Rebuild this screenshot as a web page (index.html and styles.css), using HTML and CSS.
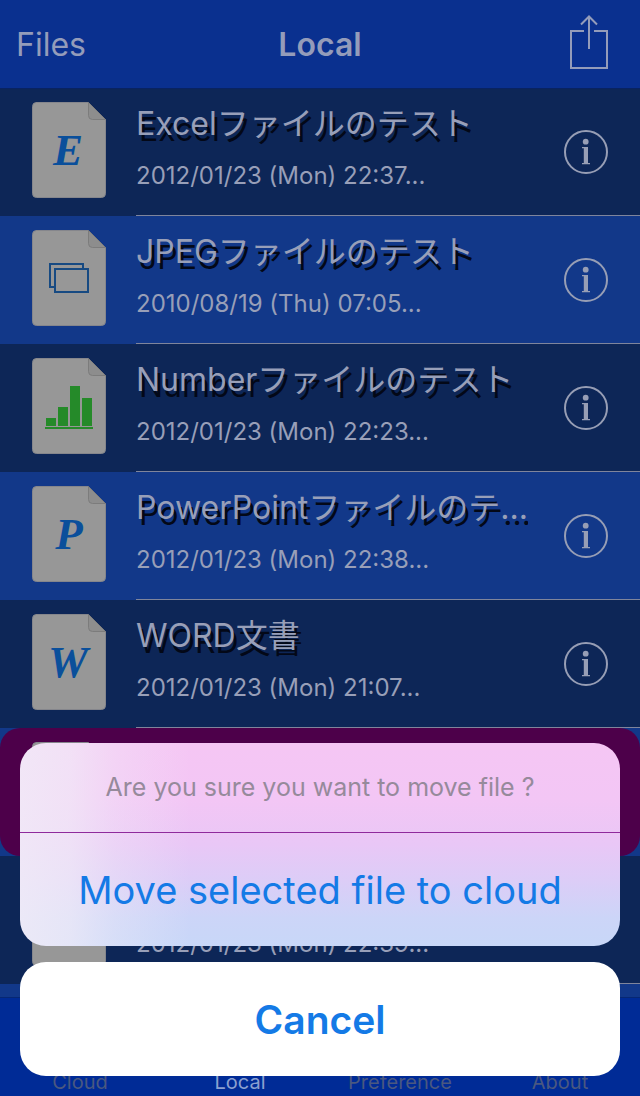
FILE: index.html
```html
<!DOCTYPE html>
<html lang="en">
<head>
<meta charset="utf-8">
<meta name="viewport" content="width=device-width, initial-scale=1">
<title>Local</title>
<link rel="stylesheet" href="styles.css">
</head>
<body>
<svg class="symbols" aria-hidden="true">
  <symbol id="sheet" viewBox="0 0 74 96">
    <path d="M4 .5H56L73.500 17.500V91.500a4 4 0 0 1-4 4H4.500a4 4 0 0 1-4-4V4.500a4 4 0 0 1 4-4Z" fill="#979797" stroke="#85868c"/>
    <path d="M56.500 .5V13.500a4 4 0 0 0 4 4H73.500Z" fill="#8d8d8d" stroke="#7c7c7c"/>
  </symbol>
  <symbol id="info" viewBox="0 0 44 44">
    <circle cx="22" cy="22" r="21" fill="none" stroke="#979eb5" stroke-width="2"/>
    <circle cx="21.700" cy="11.700" r="2.900" fill="#979eb5"/>
    <path d="M18 17H24V33H26V34.300H18V33H19.800V18.300H18Z" fill="#979eb5"/>
  </symbol>
</svg>
<div class="app">
  <header class="navbar">
    <button class="nav-back" type="button">Files</button>
    <h1 class="nav-title">Local</h1>
    <button class="nav-share" type="button" aria-label="Share">
      <svg width="38" height="54" viewBox="0 0 38 54" fill="none" stroke="#949cba" stroke-width="2"><path d="M14 16H1V53H37V16H24M19 34V1.500M11 9.500L19 1.500L27 9.500"/></svg>
    </button>
  </header>
  <main class="content">
    <ul class="files">
      <li class="file">
        <svg class="file-icon" viewBox="0 0 74 96"><use href="#sheet"/><text class="glyph" x="36" y="63">E</text></svg>
        <div class="file-body"><div class="file-text"><h2 class="file-name">Excelファイルのテスト</h2><p class="file-date">2012/01/23 (Mon) 22:37...</p></div>
        <button class="info" type="button" aria-label="File details"><svg width="44" height="44"><use href="#info"/></svg></button></div>
      </li>
      <li class="file">
        <svg class="file-icon" viewBox="0 0 74 96"><use href="#sheet"/><path d="M51 38V34H18V57H22M23 39H56V62H23Z" fill="none" stroke="#174a82" stroke-width="2"/></svg>
        <div class="file-body"><div class="file-text"><h2 class="file-name">JPEGファイルのテスト</h2><p class="file-date">2010/08/19 (Thu) 07:05...</p></div>
        <button class="info" type="button" aria-label="File details"><svg width="44" height="44"><use href="#info"/></svg></button></div>
      </li>
      <li class="file">
        <svg class="file-icon" viewBox="0 0 74 96"><use href="#sheet"/><path d="M14 60H24V68H14ZM26 49H36V68H26ZM38 28H48V68H38ZM50 40H60V68H50ZM13 69H61V71H13Z" fill="#258a29"/></svg>
        <div class="file-body"><div class="file-text"><h2 class="file-name">Numberファイルのテスト</h2><p class="file-date">2012/01/23 (Mon) 22:23...</p></div>
        <button class="info" type="button" aria-label="File details"><svg width="44" height="44"><use href="#info"/></svg></button></div>
      </li>
      <li class="file">
        <svg class="file-icon" viewBox="0 0 74 96"><use href="#sheet"/><text class="glyph" x="37" y="63">P</text></svg>
        <div class="file-body"><div class="file-text"><h2 class="file-name">PowerPointファイルのテ...</h2><p class="file-date">2012/01/23 (Mon) 22:38...</p></div>
        <button class="info" type="button" aria-label="File details"><svg width="44" height="44"><use href="#info"/></svg></button></div>
      </li>
      <li class="file">
        <svg class="file-icon" viewBox="0 0 74 96"><use href="#sheet"/><text class="glyph" x="36" y="63">W</text></svg>
        <div class="file-body"><div class="file-text"><h2 class="file-name">WORD文書</h2><p class="file-date">2012/01/23 (Mon) 21:07...</p></div>
        <button class="info" type="button" aria-label="File details"><svg width="44" height="44"><use href="#info"/></svg></button></div>
      </li>
      <li class="file selected">
        <div class="highlight"><svg class="file-icon" viewBox="0 0 74 96"><use href="#sheet"/></svg></div>
      </li>
      <li class="file">
        <svg class="file-icon" viewBox="0 0 74 96"><use href="#sheet"/></svg>
        <div class="file-body"><div class="file-text"><h2 class="file-name">&nbsp;</h2><p class="file-date">2012/01/23 (Mon) 22:39...</p></div></div>
      </li>
    </ul>
  </main>
  <nav class="tabs">
    <a class="tab" href="#cloud">Cloud</a>
    <a class="tab current" href="#local" aria-current="page">Local</a>
    <a class="tab" href="#preference">Preference</a>
    <a class="tab" href="#about">About</a>
  </nav>
  <div class="action-sheet" role="dialog" aria-modal="true" aria-labelledby="prompt">
    <div class="sheet-group">
      <p class="prompt" id="prompt">Are you sure you want to move file ?</p>
      <button class="action" type="button">Move selected file to cloud</button>
    </div>
    <button class="cancel" type="button">Cancel</button>
  </div>
</div>
</body>
</html>
```
FILE: styles.css
```css
* { box-sizing: border-box; }
body {
  margin: 0;
  font-family: Inter, "Noto Sans CJK JP", sans-serif;
  color: #989fb8;
}
h1, h2, p, ul { margin: 0; padding: 0; }
button { padding: 0; border: 0; background: none; color: inherit; font: inherit; }
svg { display: block; }
.symbols { position: absolute; width: 0; height: 0; }

.app {
  position: relative;
  display: flex;
  flex-direction: column;
  height: 100vh;
  overflow: hidden;
  background: #123889;
}

.navbar {
  display: grid;
  grid-template-columns: 1fr auto 1fr;
  align-items: center;
  flex: none;
  height: 89px;
  padding: 0 16px;
  border-bottom: 1px solid #092362;
  background: #0a308f;
  color: #949cba;
}
.nav-back { justify-self: start; font-size: 32px; }
.nav-title { font-size: 32px; font-weight: 600; }
.nav-share { justify-self: end; padding: 0 16px 4px; }

.content { flex: 1; min-height: 0; overflow: hidden; }
.files { list-style: none; margin-top: -1px; }
.file {
  display: flex;
  align-items: center;
  gap: 30px;
  height: 128px;
  padding-left: 32px;
  background: #0d2657;
}
.file:nth-child(even) { background: #123889; }
.file-icon { flex: none; width: 74px; height: 96px; margin-bottom: 4px; }
.glyph {
  font: italic bold 45px "Liberation Serif", serif;
  fill: #0a4f9b;
  text-anchor: middle;
}
.file-body {
  display: flex;
  flex: 1;
  align-items: center;
  gap: 36px;
  min-width: 0;
  height: 100%;
  padding-right: 32px;
  border-bottom: 1px solid #7f859c;
}
.file-text { flex: 1; min-width: 0; padding-bottom: 8px; }
.file-name {
  height: 56px;
  overflow: hidden;
  font-size: 32px;
  font-weight: 400;
  line-height: 56px;
  text-overflow: ellipsis;
  text-shadow: 3px 6px 0 #030817;
  white-space: nowrap;
}
.file-date { font-size: 24px; line-height: 48px; white-space: nowrap; }
.info { flex: none; }
.file.selected { padding: 0; }
.highlight {
  flex: 1;
  height: 128px;
  padding: 14px 32px;
  border-radius: 20px;
  background: #4d004a;
}

.tabs {
  display: grid;
  grid-template-columns: repeat(4, 1fr);
  align-items: end;
  flex: none;
  height: 99px;
  border-top: 1px solid #062774;
  background: #002b96;
}
.tab {
  color: #4a5880;
  font-size: 20px;
  line-height: 28px;
  text-align: center;
  text-decoration: none;
}
.tab.current { color: #8ba0d0; }

.action-sheet {
  position: absolute;
  right: 20px;
  bottom: 20px;
  left: 20px;
  display: grid;
  gap: 16px;
}
.sheet-group {
  overflow: hidden;
  border-radius: 26px;
  background:
    linear-gradient(90deg, rgba(241, 236, 247, 0.85) 0, rgba(241, 236, 247, 0.7) 50px, rgba(241, 236, 247, 0.35) 95px, rgba(241, 236, 247, 0) 170px),
    linear-gradient(#f5c6f4, #f3c6f5 28%, #e9c7f6 50%, #dccdf7 68%, #ccd5f8 86%, #c8d7f8);
}
.prompt {
  border-bottom: 1px solid #8f2a9c;
  color: #968a9b;
  font-size: 25px;
  line-height: 89px;
  text-align: center;
}
.action, .cancel { display: block; width: 100%; color: #147ae6; font-size: 38px; }
.action { height: 113px; }
.cancel {
  height: 114px;
  border-radius: 26px;
  background: #fff;
  font-size: 39px;
  font-weight: 600;
}
```
